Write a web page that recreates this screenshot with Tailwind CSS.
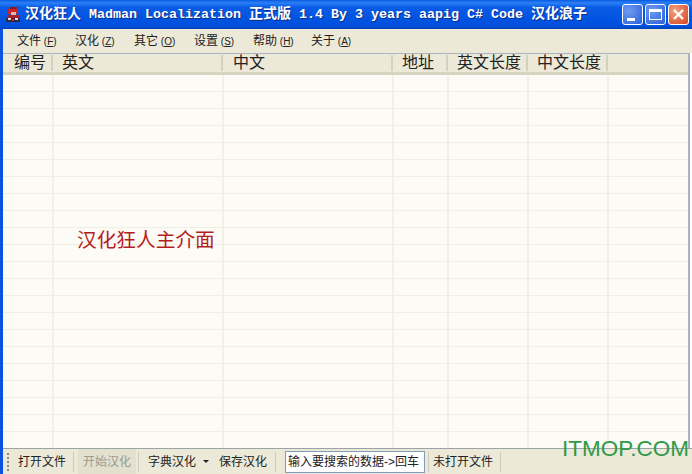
<!DOCTYPE html>
<html lang="zh-CN">
<head>
    <meta charset="UTF-8">
    <title>汉化狂人</title>
    <script src="https://cdn.jsdelivr.net/npm/@tailwindcss/browser@4"></script>
</head>
<body class="w-[692px] h-[474px] overflow-hidden bg-[#ece9d8] font-['Liberation_Sans','Noto_Sans_CJK_SC',sans-serif] text-[#111]">
    <div class="relative flex h-full flex-col">
        <!-- title bar -->
        <div class="flex h-[29px] shrink-0 items-center bg-[linear-gradient(to_bottom,#0a5be0_0%,#2b80f5_10%,#0a5ce6_25%,#0053e0_70%,#0250dc_90%,#0041b8_100%)] pl-[5px] pr-[3px]">
            <svg class="h-[16px] w-[16px] shrink-0" viewBox="0 0 16 16">
                <rect x="5" y="0" width="7" height="2" fill="#8c1a22"/>
                <rect x="3" y="2" width="10" height="5" fill="#c8242c"/>
                <rect x="6" y="5" width="5" height="3" fill="#e8b8a0"/>
                <rect x="2" y="8" width="12" height="3" fill="#a8202c"/>
                <rect x="1" y="11" width="14" height="4" fill="#2c2a48"/>
                <rect x="3" y="11" width="3" height="2" fill="#e8e0e0"/>
                <rect x="10" y="11" width="3" height="2" fill="#e8e0e0"/>
                <rect x="7" y="12" width="2" height="2" fill="#c8242c"/>
            </svg>
            <div class="ml-[4px] whitespace-pre font-['Liberation_Mono','Noto_Sans_CJK_SC',monospace] text-[13.33px] font-bold text-white [text-shadow:1px_1px_0_#0a2f8c]"><span class="text-[14px]">汉化狂人</span> Madman Localization <span class="text-[14px]">正式版</span> 1.4 By 3 years aapig C# Code <span class="text-[14px]">汉化浪子</span></div>
            <div class="ml-auto flex gap-[2px]">
                <div class="flex h-[21px] w-[21px] items-end rounded-[3px] border border-white bg-[radial-gradient(circle_at_30%_30%,#6f9bf0,#2a5fdc)] pb-[3px] pl-[4px]">
                    <div class="h-[3px] w-[8px] bg-white"></div>
                </div>
                <div class="flex h-[21px] w-[21px] items-center justify-center rounded-[3px] border border-white bg-[radial-gradient(circle_at_30%_30%,#6f9bf0,#2a5fdc)]">
                    <div class="h-[11px] w-[13px] border border-t-[3px] border-white"></div>
                </div>
                <div class="flex h-[21px] w-[21px] items-center justify-center rounded-[3px] border border-white bg-[radial-gradient(circle_at_30%_30%,#f0a080,#d8451f)]">
                    <svg class="h-[13px] w-[13px]" viewBox="0 0 13 13"><path d="M2 2 L11 11 M11 2 L2 11" stroke="#fff" stroke-width="2.4"/></svg>
                </div>
            </div>
        </div>

        <!-- window body, blue frame on the left only -->
        <div class="flex min-h-0 flex-1 flex-col border-l-[3px] border-[#0a53e0]">
            <!-- menu -->
            <div class="flex h-[24px] shrink-0 items-center text-[12px] text-[#222]">
                <span class="ml-[14px] w-[58px]">文件<span class="text-[10px]"> (<u>F</u>)</span></span>
                <span class="w-[59px]">汉化<span class="text-[10px]"> (<u>Z</u>)</span></span>
                <span class="w-[60px]">其它<span class="text-[10px]"> (<u>O</u>)</span></span>
                <span class="w-[59px]">设置<span class="text-[10px]"> (<u>S</u>)</span></span>
                <span class="w-[58px]">帮助<span class="text-[10px]"> (<u>H</u>)</span></span>
                <span>关于<span class="text-[10px]"> (<u>A</u>)</span></span>
            </div>
            <!-- list -->
            <div class="relative mr-[2px] flex min-h-0 flex-1 flex-col overflow-hidden border-t border-r-2 border-[#a9b4bf] bg-[#fcfbf5] shadow-[2px_0_0_#fff]">
                <div class="flex h-[21px] shrink-0 items-center border-b-[3px] border-[#d8d4c2] bg-[#ece9d8] text-[16px] leading-none text-[#222]">
                    <div class="w-[50px] border-r-2 border-[#d5d1bf] pl-[11px]">编号</div>
                    <div class="w-[170px] border-r-2 border-[#d5d1bf] pl-[9px]">英文</div>
                    <div class="w-[170px] border-r-2 border-[#d5d1bf] pl-[10px]">中文</div>
                    <div class="w-[55px] border-r-2 border-[#d5d1bf] pl-[9px]">地址</div>
                    <div class="w-[80px] border-r-2 border-[#d5d1bf] pl-[9px]">英文长度</div>
                    <div class="w-[80px] border-r-2 border-[#d5d1bf] pl-[9px]">中文长度</div>
                </div>
                <div id="rows" class="min-h-0 flex-1 overflow-hidden"></div>
                <div class="absolute left-[74px] top-[177px] text-[19.7px] leading-none text-[#b51e1e]">汉化狂人主介面</div>
            </div>
            <!-- toolbar -->
            <div class="flex h-[26px] shrink-0 items-center border-t border-[#9aa3a8] text-[12px] text-[#222]">
                <div class="ml-[4px] h-[18px] w-[2px] border-l-2 border-dotted border-[#8d8a78]"></div>
                <div class="ml-[9px] w-[55px]">打开文件</div>
                <div class="h-[20px] w-px bg-[#cfcbb8]"></div>
                <div class="ml-[4px] flex h-full w-[58px] items-center justify-center bg-[#e3e0d0] text-[#9a9a90]">开始汉化</div>
                <div class="ml-[2px] h-[20px] w-px bg-[#cfcbb8]"></div>
                <div class="ml-[9px]">字典汉化</div>
                <div class="ml-[7px] h-0 w-0 border-x-[3px] border-t-[3px] border-x-transparent border-t-[#222]"></div>
                <div class="ml-[10px]">保存汉化</div>
                <div class="ml-[8px] h-[20px] w-px bg-[#cfcbb8]"></div>
                <div class="ml-[9px] flex h-[22px] w-[140px] items-center border border-[#7f9db9] bg-white pl-[2px]">输入要搜索的数据-&gt;回车</div>
                <div class="ml-[3px] h-[20px] w-px bg-[#cfcbb8]"></div>
                <div class="ml-[4px]">未打开文件</div>
                <div class="ml-[7px] h-[20px] w-px bg-[#cfcbb8]"></div>
            </div>
        </div>
        <div class="absolute left-[562px] top-[438px] font-['Liberation_Sans',sans-serif] text-[22.5px] leading-none text-[#2f9a47]">ITMOP.COM</div>
    </div>

    <script>
        const widths = [51, 170, 170, 55, 80, 80];
        const rows = document.getElementById('rows');
        for (let i = 0; i < 22; i++) {
            const row = document.createElement('div');
            row.className = 'flex h-[17px] border-b border-[#f0efe3]';
            widths.forEach(w => {
                const cell = document.createElement('div');
                cell.className = 'h-full border-r-2 border-[#f2f1e7]';
                cell.style.width = w + 'px';
                row.appendChild(cell);
            });
            rows.appendChild(row);
        }
    </script>
</body>
</html>
